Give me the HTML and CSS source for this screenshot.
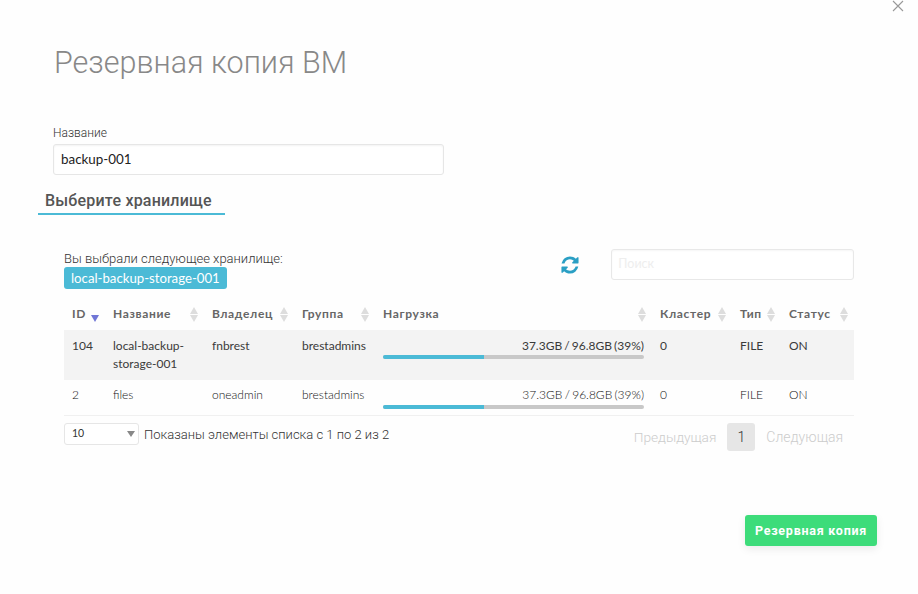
FILE: index.html
```html
<!DOCTYPE html>
<html lang="ru">
<head>
<meta charset="utf-8">
<title>Резервная копия ВМ</title>
<link rel="stylesheet" href="styles.css">
</head>
<body>
<div class="modal">
  <button class="close" aria-label="Закрыть">
    <svg width="12" height="12" viewBox="0 0 12 12"><path d="M1 1 L11 11 M11 1 L1 11" stroke="#999" stroke-width="1.1" fill="none"/></svg>
  </button>
  <h1 class="title">Резервная копия ВМ</h1>
  <div class="field">
    <label class="field-label">Название</label>
    <input class="field-input" type="text" value="backup-001">
  </div>
  <div class="section"><h2 class="section-title">Выберите хранилище</h2></div>
  <div class="panel">
    <div class="toolbar">
      <div class="selected">
        <div class="selected-label">Вы выбрали следующее хранилище:</div>
        <span class="tag">local-backup-storage-001</span>
      </div>
      <svg class="refresh" width="20" height="20" viewBox="0 0 1792 1792"><path fill="#2a9fc4" d="M1639 1056q0 5-1 7-64 268-268 434.500t-478 166.500q-146 0-282.500-55t-243.500-157l-129 129q-19 19-45 19t-45-19-19-45v-448q0-26 19-45t45-19h448q26 0 45 19t19 45-19 45l-137 137q71 66 161 102t187 36q134 0 250-65t186-179q11-17 53-117 8-23 30-23h192q13 0 22.500 9.500t9.500 22.500zm25-800v448q0 26-19 45t-45 19h-448q-26 0-45-19t-19-45 19-45l138-138q-148-137-349-137-134 0-250 65t-186 179q-11 17-53 117-8 23-30 23h-199q-13 0-22.500-9.500t-9.500-22.500v-7q65-268 270-434.500t480-166.500q146 0 284 55.500t245 156.500l130-129q19-19 45-19t45 19 19 45z"/></svg>
      <input class="search" type="text" placeholder="Поиск">
    </div>
    <table class="grid">
      <colgroup>
        <col class="c-id"><col class="c-name"><col class="c-owner"><col class="c-group"><col class="c-load"><col class="c-cluster"><col class="c-type"><col class="c-status">
      </colgroup>
      <thead>
        <tr>
          <th>ID<span class="sort-active"></span></th>
          <th>Название<span class="sort"></span></th>
          <th>Владелец<span class="sort"></span></th>
          <th>Группа<span class="sort"></span></th>
          <th>Нагрузка<span class="sort"></span></th>
          <th>Кластер<span class="sort"></span></th>
          <th>Тип<span class="sort"></span></th>
          <th>Статус<span class="sort"></span></th>
        </tr>
      </thead>
      <tbody>
        <tr class="row-selected">
          <td>104</td>
          <td>local-backup-storage-001</td>
          <td>fnbrest</td>
          <td>brestadmins</td>
          <td><div class="load-text">37.3GB / 96.8GB (39%)</div><div class="bar"><div class="bar-fill" style="width:38.7%"></div></div></td>
          <td>0</td>
          <td>FILE</td>
          <td>ON</td>
        </tr>
        <tr class="row-plain">
          <td>2</td>
          <td>files</td>
          <td>oneadmin</td>
          <td>brestadmins</td>
          <td><div class="load-text">37.3GB / 96.8GB (39%)</div><div class="bar"><div class="bar-fill" style="width:38.7%"></div></div></td>
          <td>0</td>
          <td>FILE</td>
          <td>ON</td>
        </tr>
      </tbody>
    </table>
    <div class="footer">
      <div class="length"><span class="select">10</span><span class="info">Показаны элементы списка с 1 по 2 из 2</span></div>
      <div class="pager"><span class="page-link page-prev">Предыдущая</span><span class="page-current">1</span><span class="page-link">Следующая</span></div>
    </div>
  </div>
  <div class="actions"><button class="primary">Резервная копия</button></div>
</div>
</body>
</html>
```

FILE: styles.css
```css
* { box-sizing: border-box; }
html, body { margin: 0; height: 100%; }
body { background: #fefefe; font-family: Lato, Roboto, sans-serif; color: #333; overflow: hidden; }
.modal { position: relative; width: 918px; height: 594px; padding: 43px 64px 0 38px; }
.close { position: absolute; top: 0; right: 14px; width: 12px; height: 12px; padding: 0; border: 0; background: none; line-height: 0; }
.title { margin: 0 0 0 16px; font: 300 30.5px/40px Roboto, sans-serif; color: #888; }
.field { margin: 42px 0 0 15px; width: 391px; }
.field-label { display: block; font: 300 12px/16px Roboto, sans-serif; color: #333; margin-bottom: 3px; }
.field-input { display: block; width: 100%; height: 31px; padding: 0 7px 2px; border: 1px solid #e6e6e6; border-radius: 3px; box-shadow: inset 0 1px 2px rgba(0,0,0,.05); background: #fff; font: 400 13.4px Lato, Roboto, sans-serif; color: #222; outline: 0; }
.section { display: inline-block; margin-top: 15px; width: 187px; height: 25px; border-bottom: 2px solid #4bbad6; padding-left: 7px; vertical-align: top; }
.section-title { margin: 0; font: 500 16px/21px Roboto, sans-serif; color: #555; letter-spacing: .2px; white-space: nowrap; }
.panel { margin: 34px 0 0 26px; width: 790px; }
.toolbar { display: flex; align-items: flex-start; height: 48px; }
.selected { width: 487px; padding-top: 2px; }
.selected-label { font: 300 13px/15px Roboto, sans-serif; color: #333; }
.tag { display: block; width: fit-content; height: 22px; margin-top: 1px; padding: 0 7px; border-radius: 3px; background: #4bbad6; color: #fff; font: 400 13.2px/22px Lato, Roboto, sans-serif; }
.refresh { margin: 6px 0 0 10px; }
.search { margin-left: 31px; width: 243px; height: 31px; padding: 0 6px 2px; border: 1px solid #e8e8e8; border-radius: 3px; box-shadow: inset 0 1px 2px rgba(0,0,0,.04); background: #fff; font: 400 12.5px Lato, Roboto, sans-serif; outline: 0; }
.search::placeholder { color: #eeeeee; opacity: 1; }
.grid { width: 790px; table-layout: fixed; border-collapse: collapse; }
.c-id { width: 41px; } .c-name { width: 99px; } .c-owner { width: 90px; } .c-group { width: 81px; }
.c-load { width: 277px; } .c-cluster { width: 80px; } .c-type { width: 49px; } .c-status { width: 73px; }
.grid th { position: relative; height: 33px; padding: 0 8px; text-align: left; font: 700 12px/16px Lato, Roboto, sans-serif; color: #666; letter-spacing: .65px; white-space: nowrap; }
.grid td { padding: 7px 8px; vertical-align: top; font: 400 12px/18px Lato, Roboto, sans-serif; color: #3a3a3a; }
.row-selected { background: #f3f3f3; height: 50px; }
.row-plain { height: 35px; border-bottom: 1px solid #f0f0f0; }
.grid .row-plain td { padding: 6px 8px; font-weight: 300; color: #111; }
.row-plain .bar { margin-top: 1px; }
.sort { position: absolute; right: 5px; top: 10px; width: 9px; height: 15px; }
.sort::before, .sort::after { content: ""; position: absolute; left: 0; border-left: 4.5px solid transparent; border-right: 4.5px solid transparent; }
.sort::before { top: 0; border-bottom: 7px solid #ddd; }
.sort::after { bottom: 0; border-top: 7px solid #ddd; }
.sort-active { position: absolute; left: 27px; top: 18px; border-left: 4.5px solid transparent; border-right: 4.5px solid transparent; border-top: 7px solid #7076d6; }
.load-text { text-align: right; line-height: 18px; word-spacing: -1px; }
.bar { height: 4px; border-radius: 2px; background: #c8c8c8; overflow: hidden; }
.bar-fill { height: 100%; background: #4bbad6; }
.footer { display: flex; justify-content: space-between; align-items: flex-start; margin-top: 7px; }
.length { display: flex; align-items: center; height: 22px; }
.select { position: relative; display: block; width: 75px; height: 22px; padding-left: 7px; border: 1px solid #e6e6e6; border-radius: 3px; background: #fff; font: 400 10.5px/19px Lato, Roboto, sans-serif; color: #333; }
.select::after { content: ""; position: absolute; right: 3px; top: 7px; border-left: 4.5px solid transparent; border-right: 4.5px solid transparent; border-top: 6px solid #888; }
.info { margin-left: 5px; padding-top: 2px; font: 300 13px/22px Roboto, sans-serif; color: #333; }
.pager { display: flex; align-items: center; margin-right: 2px; }
.page-link { padding: 0 9px; font: 300 14px/28px Roboto, sans-serif; color: #ccc; }
.page-prev { font-size: 13.7px; }
.page-current { width: 28px; height: 28px; margin: 0 2px; border-radius: 3px; background: #e6e6e6; text-align: center; font: 300 14px/28px Roboto, sans-serif; color: #333; }
.actions { position: absolute; left: 745px; top: 515px; }
.primary { display: block; width: 132px; height: 31px; padding: 0; border: 0; border-radius: 3px; background: #3ddc7a; box-shadow: 0 3px 8px rgba(0,0,0,.08); color: #fff; font: 700 12.5px/31px Roboto, sans-serif; letter-spacing: .75px; }
```
